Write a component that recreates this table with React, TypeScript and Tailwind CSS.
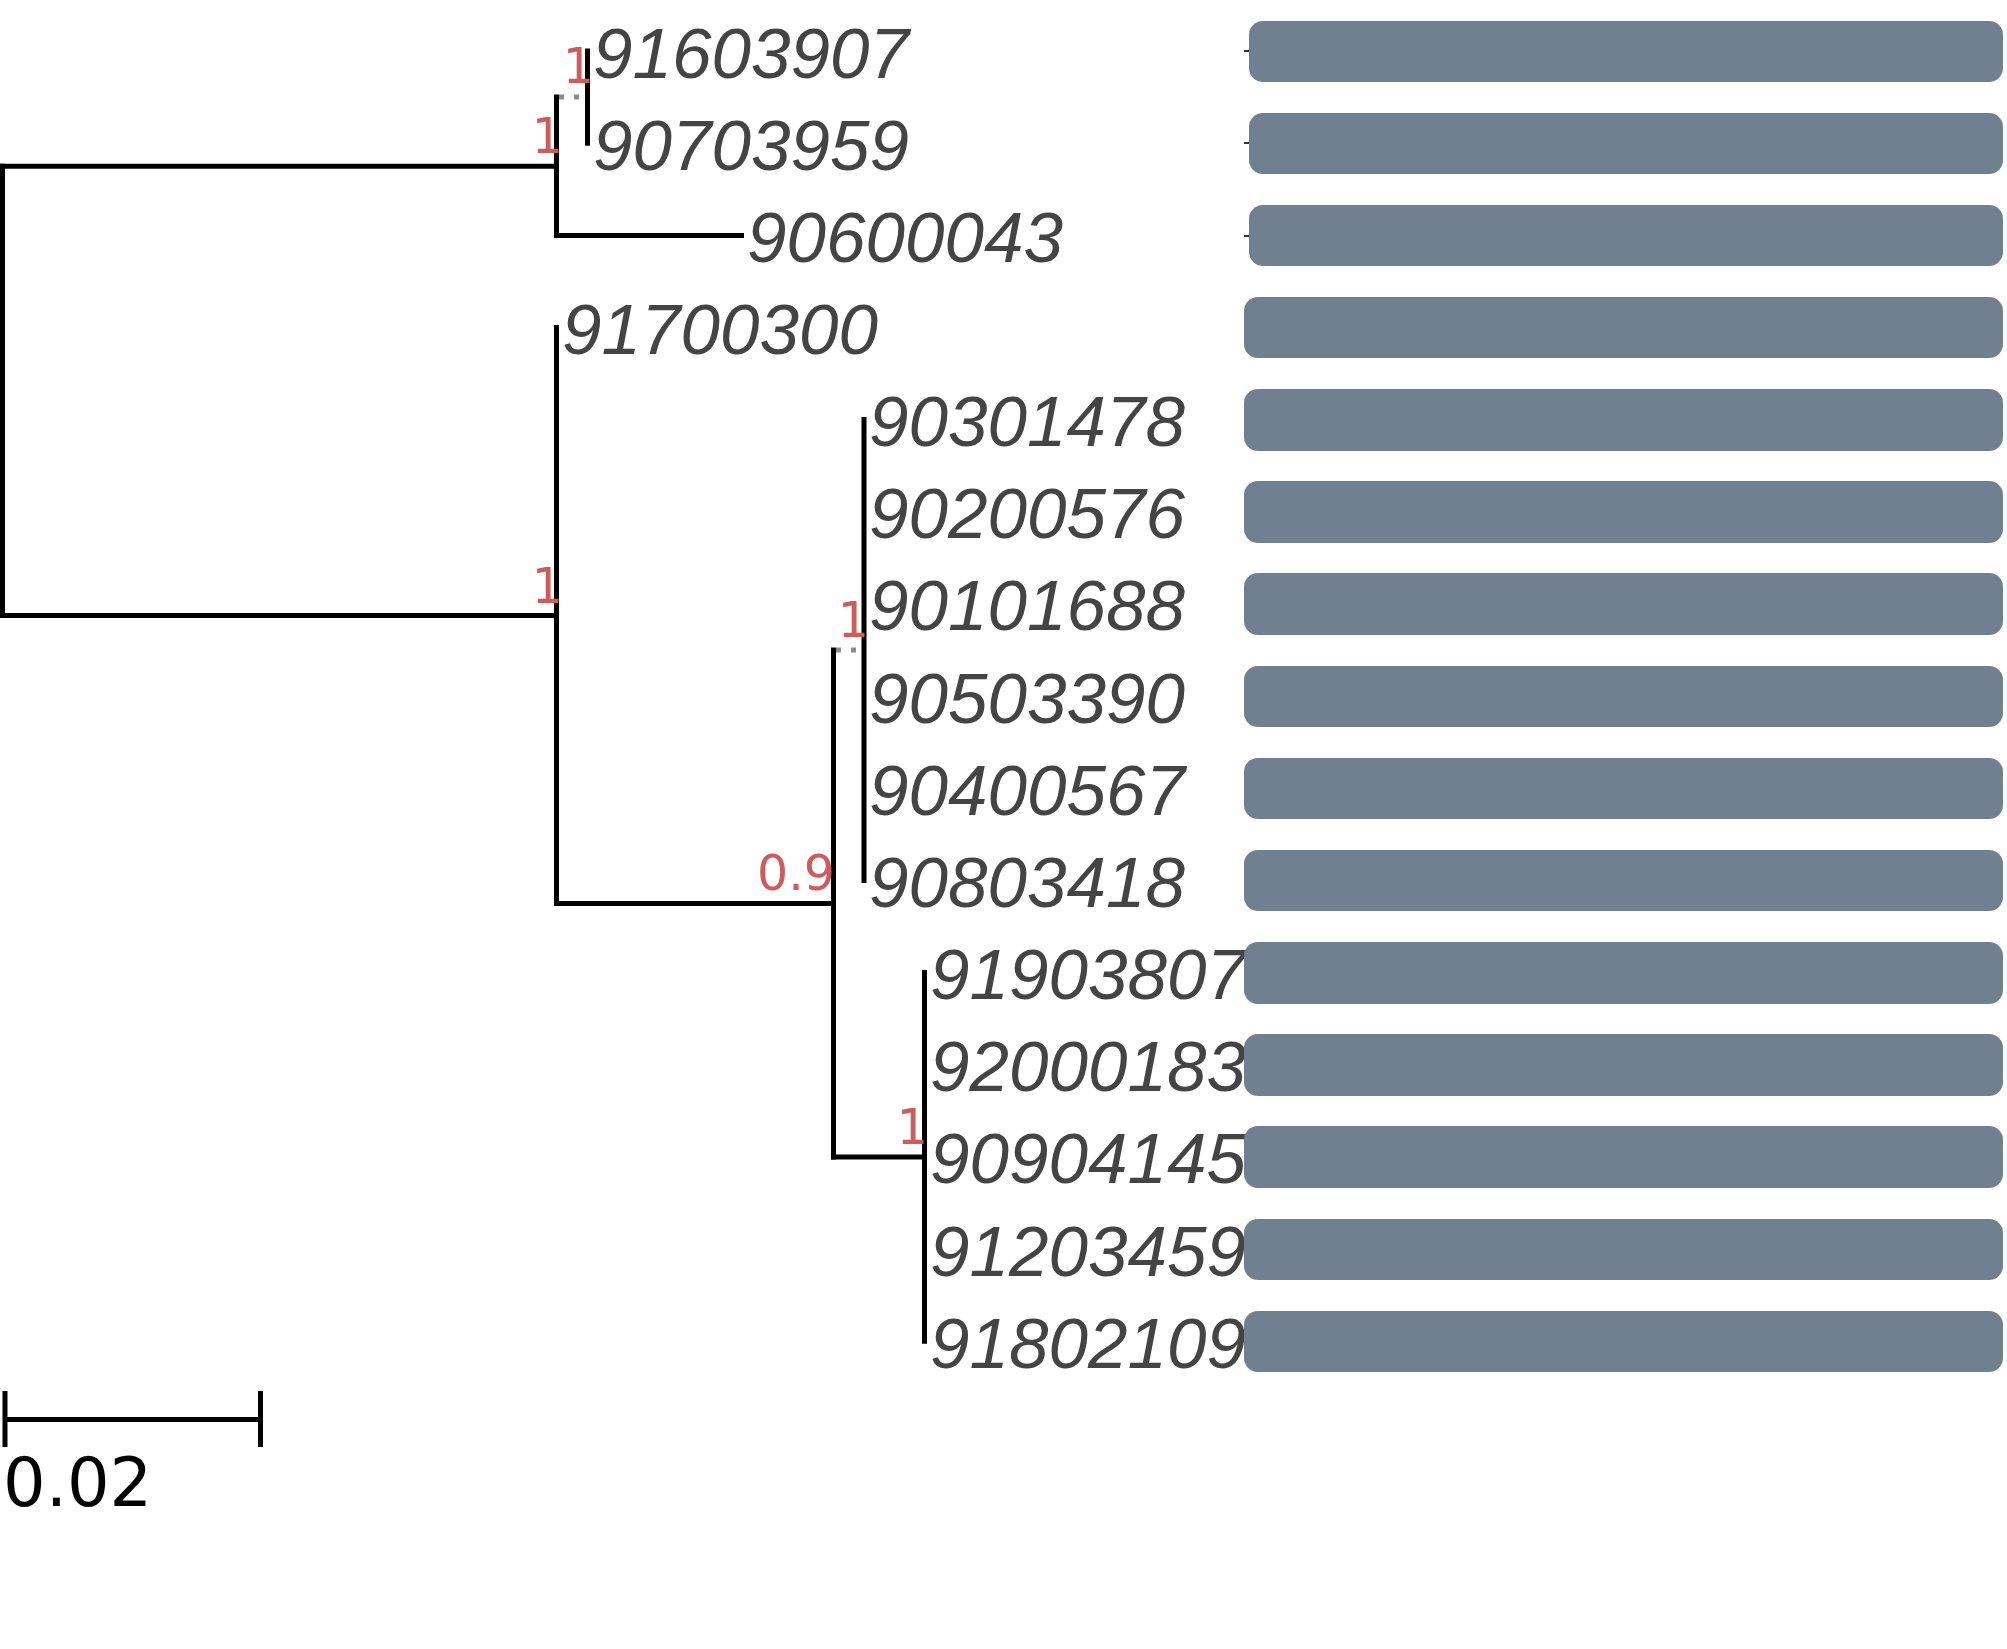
const ROW = 92.16;
const cy = (i: number) => 51 + ROW * i;

const leaves: { id: string; x: number }[] = [
  { id: '91603907', x: 593 },
  { id: '90703959', x: 593 },
  { id: '90600043', x: 747 },
  { id: '91700300', x: 562 },
  { id: '90301478', x: 869 },
  { id: '90200576', x: 869 },
  { id: '90101688', x: 869 },
  { id: '90503390', x: 869 },
  { id: '90400567', x: 869 },
  { id: '90803418', x: 869 },
  { id: '91903807', x: 930 },
  { id: '92000183', x: 930 },
  { id: '90904145', x: 930 },
  { id: '91203459', x: 930 },
  { id: '91802109', x: 930 },
];

// support values: right edge x, baseline y
const supports = [
  { v: '1', x: 594, y: 83 },
  { v: '1', x: 563, y: 153 },
  { v: '1', x: 563, y: 603 },
  { v: '1', x: 869, y: 637 },
  { v: '0.9', x: 835, y: 890 },
  { v: '1', x: 928, y: 1143.5 },
];

const branches = [
  // root
  'M2.5 166.3 V615.5',
  'M2.5 166.3 H556.5',
  'M2.5 615.5 H556.5',
  // upper clade
  'M556.5 97.1 V235.4',
  'M556.5 235.4 H741.5',
  'M587.5 51 V143.2',
  // lower clade
  'M556.5 327.5 V903.5',
  'M556.5 903.5 H833.5',
  'M833.5 650 V1156.9',
  'M864 419.6 V880.4',
  'M833.5 1156.9 H924.5',
  'M924.5 972.6 V1341.2',
];

const dotted = ['M559 97.1 H585', 'M836 650 H862'];

function Tree() {
  return (
    <svg width={1244} height={1388} className="shrink-0 overflow-visible">
      <g stroke="#8c8c8c" strokeWidth={5} strokeDasharray="5 10" fill="none">
        {dotted.map((d) => (
          <path key={d} d={d} />
        ))}
      </g>
      <g stroke="#000" strokeWidth={5} strokeLinecap="square" fill="none">
        {branches.map((d) => (
          <path key={d} d={d} />
        ))}
      </g>
      <g
        fill="#cd5c5c"
        fontSize={49}
        textAnchor="end"
        style={{ fontFamily: '"DejaVu Sans", Verdana, sans-serif' }}
      >
        {supports.map((s) => (
          <text key={`${s.x}-${s.y}`} x={s.x} y={s.y}>
            {s.v}
          </text>
        ))}
      </g>
      <g
        fill="#444444"
        fontSize={71}
        fontStyle="italic"
        style={{ fontFamily: '"Liberation Sans", Arial, sans-serif' }}
      >
        {leaves.map((l, i) => (
          <text key={l.id} x={l.x} y={cy(i) + 26.5}>
            {l.id}
          </text>
        ))}
      </g>
    </svg>
  );
}

function Bars() {
  return (
    <div className="relative flex flex-1 flex-col gap-[30.66px] pt-[20.5px] pr-[4px]">
      {leaves.map((l, i) =>
        i < 3 ? (
          <div key={l.id} className="flex h-[61.5px] items-center">
            <span className="h-[2px] w-[5px] bg-[#333333]" />
            <div className="h-full flex-1 rounded-[14px] bg-[#708090]" />
          </div>
        ) : (
          <div key={l.id} className="h-[61.5px] rounded-[14px] bg-[#708090]" />
        ),
      )}
    </div>
  );
}

function ScaleBar() {
  return (
    <div className="flex flex-col">
      <svg width={270} height={62} className="block">
        <g stroke="#000" strokeWidth={5} fill="none">
          <path d="M5 31.5 H260.5" />
          <path d="M5 3 V59" />
          <path d="M260.5 3 V59" />
        </g>
      </svg>
      <div className="pl-[3px] text-[67px] leading-none text-black [font-family:'DejaVu_Sans',Verdana,sans-serif]">
        0.02
      </div>
    </div>
  );
}

export default function App() {
  return (
    <div className="h-[1649px] w-[2007px] overflow-hidden bg-white">
      <div className="flex">
        <Tree />
        <Bars />
      </div>
      <ScaleBar />
    </div>
  );
}
